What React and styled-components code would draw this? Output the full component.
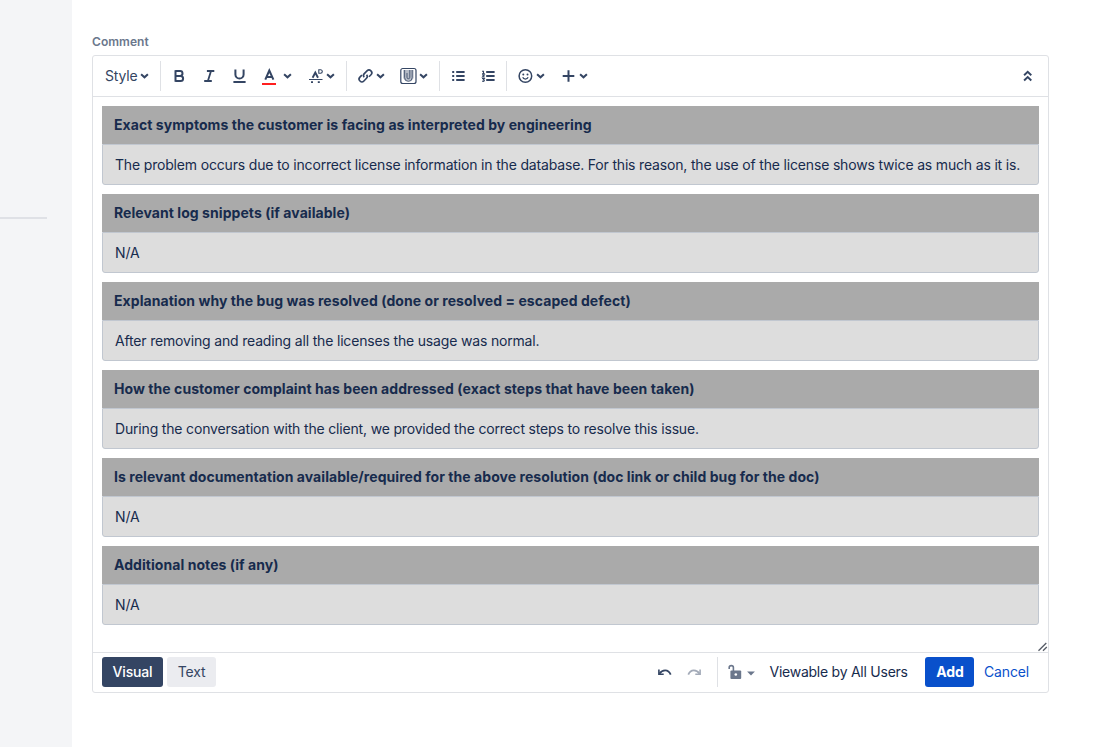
import React from 'react';
import styled, { createGlobalStyle } from 'styled-components';

const GlobalStyle = createGlobalStyle`
  *, *::before, *::after { box-sizing: border-box; }
  body {
    margin: 0;
    background: #fff;
    color: #172b4d;
    font-family: Inter, "Liberation Sans", sans-serif;
    font-size: 14px;
    letter-spacing: -0.172px;
    line-height: 20px;
    overflow: hidden;
  }
  button { letter-spacing: inherit; }
`;

const Page = styled.div`
  display: flex;
  height: 747px;
`;

const Sidebar = styled.aside`
  flex: none;
  width: 72px;
  padding-top: 217px;
  background: #f4f5f7;
`;

const SidebarRule = styled.div`
  width: 47px;
  height: 2px;
  background: #dfe1e6;
`;

const Main = styled.main`
  width: 977px;
  padding: 34px 0 0 20px;
`;

const FieldLabel = styled.label`
  display: block;
  height: 21px;
  color: #6b778c;
  font-size: 12px;
  font-weight: 600;
  letter-spacing: 0.05px;
  line-height: 16px;
`;

const Editor = styled.section`
  display: flex;
  flex-direction: column;
  height: 638px;
  border: 1px solid #dfe1e5;
  border-radius: 3px;
`;

const Toolbar = styled.div`
  display: flex;
  align-items: center;
  height: 41px;
  border-bottom: 1px solid #dfe1e5;
`;

const ToolGroup = styled.div`
  display: flex;
  align-items: center;
  width: ${(p) => p.$width}px;
  height: 30px;
  padding-left: ${(p) => p.$pad ?? 3}px;
  border-right: ${(p) => (p.$last ? 'none' : '1px solid #dfe1e5')};
`;

const ToolButton = styled.button`
  display: flex;
  flex: none;
  align-items: center;
  width: ${(p) => p.$width ?? 30}px;
  height: 30px;
  padding: 0 0 0 5px;
  border: 0;
  background: none;
  color: #344563;
  font: inherit;
`;

const StyleButton = styled(ToolButton)`
  padding-left: 0;
`;

const CollapseButton = styled(ToolButton)`
  margin: 0 5px 0 auto;
`;

const Icon = styled.svg`
  flex: none;
  width: 20px;
  height: 20px;
  fill: none;
  stroke: currentColor;
  stroke-width: 2;
`;

const ChevronIcon = styled(Icon)`
  width: 10px;
  height: 10px;
  margin-left: ${(p) => p.$gap ?? 0}px;
`;

const Content = styled.div`
  display: flex;
  flex: 1;
  flex-direction: column;
  padding: 9px 9px 0;
`;

const Panel = styled.article`
  height: 79px;
  margin-bottom: 9px;
`;

const PanelTitle = styled.h3`
  height: 38px;
  margin: 0;
  padding: 9px 12px;
  background: #aaa;
  font-size: 14px;
  font-weight: 700;
  letter-spacing: 0.06px;
  line-height: 20px;
`;

const PanelBody = styled.p`
  height: 41px;
  margin: 0;
  padding: 10px 12px;
  border: 1px solid #c1c7d0;
  border-radius: 0 0 3px 3px;
  background: #ddd;
  white-space: nowrap;
`;

const ResizeGrip = styled.svg`
  width: 12px;
  height: 12px;
  margin: auto -9px 0 auto;
  fill: none;
  stroke: #555b66;
  stroke-width: 1.3;
`;

const Footer = styled.footer`
  display: flex;
  align-items: center;
  height: 40px;
  padding: 0 9px 1px;
  border-top: 1px solid #dfe1e5;
`;

const ModeButton = styled.button`
  width: ${(p) => p.$width}px;
  height: 30px;
  margin-right: 4px;
  padding: 0;
  border: 0;
  border-radius: 3px;
  background: ${(p) => (p.$active ? '#344563' : '#ebecf0')};
  color: ${(p) => (p.$active ? '#fff' : '#344563')};
  font: inherit;
  font-weight: ${(p) => (p.$active ? 500 : 400)};
`;

const History = styled.div`
  display: flex;
  align-items: center;
  gap: 9px;
  width: 71px;
  height: 30px;
  margin-left: auto;
  padding-left: 8px;
  border-right: 1px solid #dfe1e5;
  color: #344563;
`;

const Visibility = styled.div`
  display: flex;
  align-items: center;
  width: 207px;
  padding-left: 7px;
  white-space: nowrap;
`;

const VisibilityLabel = styled.span`
  margin-left: 13.5px;
  letter-spacing: -0.25px;
`;

const SubmitButton = styled.button`
  width: 49px;
  height: 30px;
  padding: 0 0 0 1px;
  border: 0;
  border-radius: 3px;
  background: #0950cb;
  color: #fff;
  font: inherit;
  font-weight: 700;
`;

const CancelButton = styled.button`
  width: 65px;
  height: 30px;
  padding: 0;
  border: 0;
  background: none;
  color: #0950cb;
  font: inherit;
`;

const Chevron = ({ gap }) => (
  <ChevronIcon viewBox="0 0 10 10" $gap={gap}>
    <path d="M2.1 3.2 5.5 6.3 8.9 3.2" />
  </ChevronIcon>
);

const BoldIcon = () => (
  <Icon viewBox="0 0 20 20">
    <path d="M6.4 5.1h4.7a2.4 2.4 0 0 1 0 4.8H6.4M6.4 9.9h5.2a2.5 2.5 0 0 1 0 5H6.4M6.5 4.2v11.6" />
  </Icon>
);

const ItalicIcon = () => (
  <Icon viewBox="0 0 20 20">
    <path strokeWidth="1.8" d="M7.9 5h7.4M5.2 15h7.6M12 5 8.9 15" />
  </Icon>
);

const UnderlineIcon = () => (
  <Icon viewBox="0 0 20 20">
    <path d="M6.4 3.6v4.9a4.1 4.1 0 0 0 8.2 0V3.6M4.4 16h12.2" />
  </Icon>
);

const ColorIcon = () => (
  <Icon viewBox="0 0 20 20">
    <path d="M6.3 13.6 10.3 4.5l4.1 9.1M7.6 10.9h5.5" />
    <path stroke="#ff1f1f" d="M3 18h14" />
  </Icon>
);

const MoreFormatIcon = () => (
  <Icon viewBox="0 0 20 20">
    <path strokeWidth="1.9" d="M6.6 11.8 9.3 6.6l2.7 5.2" />
    <path strokeWidth="1.1" d="M3 13.5h13.5M12.8 3.8h1.8a1.7 1.7 0 0 1 0 3.4h-1.8z" />
    <path strokeWidth="1.8" d="M5 16.2h2M11.8 16.2h2" />
  </Icon>
);

const LinkIcon = () => (
  <Icon viewBox="0 0 20 20">
    <path
      strokeWidth="1.6"
      d="M8.2 11.2c-1-1.2-.9-2.6.1-3.6l2.7-2.7a2.7 2.7 0 0 1 4 3.9l-2 2M10.6 8.7c1 1.2.9 2.6-.1 3.6L7.9 15a2.7 2.7 0 0 1-4-3.9l2-2"
    />
  </Icon>
);

const AttachmentIcon = () => (
  <Icon viewBox="0 0 20 20">
    <rect strokeWidth="1.2" x="2.8" y="2.5" width="15.2" height="15" rx="2" />
    <path fill="#b5bbc6" stroke="none" d="M5.2 4h10.4v7.5a5.2 3.5 0 0 1-10.4 0z" />
    <path strokeWidth=".8" d="M14.2 4v7.6a3.8 3.8 0 0 1-7.6 0V4M11.8 4v7.3a1.4 1.4 0 0 1-2.8 0V7" />
  </Icon>
);

const BulletListIcon = () => (
  <Icon viewBox="0 0 20 20">
    <path d="M8.2 5.9h8.4M8.2 10h8.4M8.2 14.1h8.4" />
    <path d="M4.2 5.9h2M4.2 10h2M4.2 14.1h2" />
  </Icon>
);

const NumberListIcon = () => (
  <Icon viewBox="0 0 20 20">
    <path d="M8.2 5.9h8.4M8.2 10h8.4M8.2 14.1h8.4" />
    <path strokeWidth="1.1" d="M4 5.2h1.5v2.6M4 7.8h2.9M4 9h2.3L4.5 11h2.3M4 12.5h2.3l-1 1.3c1.8.2 1.2 1.9-1.1 1.5" />
  </Icon>
);

const EmojiIcon = () => (
  <Icon viewBox="0 0 20 20">
    <circle strokeWidth="1.5" cx="10.4" cy="10" r="6.3" />
    <path strokeWidth="1.3" d="M7.7 11.3c.9 2.3 4.5 2.3 5.4 0" />
    <circle cx="8.3" cy="8.4" r="1" fill="currentColor" stroke="none" />
    <circle cx="12.5" cy="8.4" r="1" fill="currentColor" stroke="none" />
  </Icon>
);

const PlusIcon = () => (
  <Icon viewBox="0 0 20 20">
    <path d="M4.7 10h11.6M10.5 4.2v11.6" />
  </Icon>
);

const CollapseIcon = () => (
  <Icon viewBox="0 0 20 20">
    <path strokeWidth="1.9" d="m6.1 9.3 3.6-3.5 3.6 3.5M6.1 14.5l3.6-3.5 3.6 3.5" />
  </Icon>
);

const UndoIcon = () => (
  <Icon viewBox="0 0 20 20">
    <path strokeWidth="1.8" d="M4.4 11.7C7.5 7.3 13.2 6.9 15.7 12.6" />
    <path strokeWidth="1.6" d="M3.9 7.4v4.9h4.8" />
  </Icon>
);

const RedoIcon = () => (
  <Icon viewBox="0 0 20 20" opacity=".45">
    <path strokeWidth="1.8" d="M15.6 11.7C12.5 7.3 6.8 6.9 4.3 12.6" />
    <path strokeWidth="1.6" d="M16.1 7.4v4.9h-4.8" />
  </Icon>
);

const UnlockIcon = () => (
  <Icon viewBox="0 0 20 20" color="#6b778c">
    <path strokeWidth="1.6" d="M4.2 7.1V5.6c0-2.7 4.2-2.7 4.2 0V9.4" />
    <rect x="5.4" y="8.4" width="10.8" height="8.6" rx="1" fill="currentColor" stroke="none" />
    <circle cx="10.8" cy="12.5" r="1.3" fill="#fff" stroke="none" />
  </Icon>
);

const CaretIcon = () => (
  <ChevronIcon viewBox="0 0 10 10" $gap={1}>
    <path fill="#6b778c" stroke="none" d="M1.1 4.6h7.8L5 8.6z" />
  </ChevronIcon>
);

const sections = [
  {
    title: 'Exact symptoms the customer is facing as interpreted by engineering',
    text: 'The problem occurs due to incorrect license information in the database. For this reason, the use of the license shows twice as much as it is.',
  },
  { title: 'Relevant log snippets (if available)', text: 'N/A' },
  {
    title: 'Explanation why the bug was resolved (done or resolved = escaped defect)',
    text: 'After removing and reading all the licenses the usage was normal.',
  },
  {
    title: 'How the customer complaint has been addressed (exact steps that have been taken)',
    text: 'During the conversation with the client, we provided the correct steps to resolve this issue.',
  },
  {
    title: 'Is relevant documentation available/required for the above resolution (doc link or child bug for the doc)',
    text: 'N/A',
  },
  { title: 'Additional notes (if any)', text: 'N/A' },
];

export default function App() {
  return (
    <Page>
      <GlobalStyle />
      <Sidebar>
        <SidebarRule />
      </Sidebar>
      <Main>
        <FieldLabel>Comment</FieldLabel>
        <Editor>
          <Toolbar>
            <ToolGroup $width={68} $pad={12}>
              <StyleButton $width={50}>
                Style
                <Chevron gap={2} />
              </StyleButton>
            </ToolGroup>
            <ToolGroup $width={186}>
              <ToolButton><BoldIcon /></ToolButton>
              <ToolButton><ItalicIcon /></ToolButton>
              <ToolButton><UnderlineIcon /></ToolButton>
              <ToolButton $width={47}><ColorIcon /><Chevron gap={3} /></ToolButton>
              <ToolButton $width={42}><MoreFormatIcon /><Chevron gap={-1} /></ToolButton>
            </ToolGroup>
            <ToolGroup $width={93} $pad={4}>
              <ToolButton $width={42}><LinkIcon /><Chevron gap={-1} /></ToolButton>
              <ToolButton $width={42}><AttachmentIcon /><Chevron /></ToolButton>
            </ToolGroup>
            <ToolGroup $width={67}>
              <ToolButton><BulletListIcon /></ToolButton>
              <ToolButton><NumberListIcon /></ToolButton>
            </ToolGroup>
            <ToolGroup $last $width={100}>
              <ToolButton $width={43}><EmojiIcon /><Chevron /></ToolButton>
              <ToolButton $width={43}><PlusIcon /><Chevron /></ToolButton>
            </ToolGroup>
            <CollapseButton><CollapseIcon /></CollapseButton>
          </Toolbar>
          <Content>
            {sections.map((s) => (
              <Panel key={s.title}>
                <PanelTitle>{s.title}</PanelTitle>
                <PanelBody>{s.text}</PanelBody>
              </Panel>
            ))}
            <ResizeGrip viewBox="0 0 12 12">
              <path d="M2.5 10.8 10.3 3M7 10.8l3.8-3.8" />
            </ResizeGrip>
          </Content>
          <Footer>
            <ModeButton $active $width={61}>Visual</ModeButton>
            <ModeButton $width={49}>Text</ModeButton>
            <History>
              <UndoIcon />
              <RedoIcon />
            </History>
            <Visibility>
              <UnlockIcon />
              <CaretIcon />
              <VisibilityLabel>Viewable by All Users</VisibilityLabel>
            </Visibility>
            <SubmitButton>Add</SubmitButton>
            <CancelButton>Cancel</CancelButton>
          </Footer>
        </Editor>
      </Main>
    </Page>
  );
}
